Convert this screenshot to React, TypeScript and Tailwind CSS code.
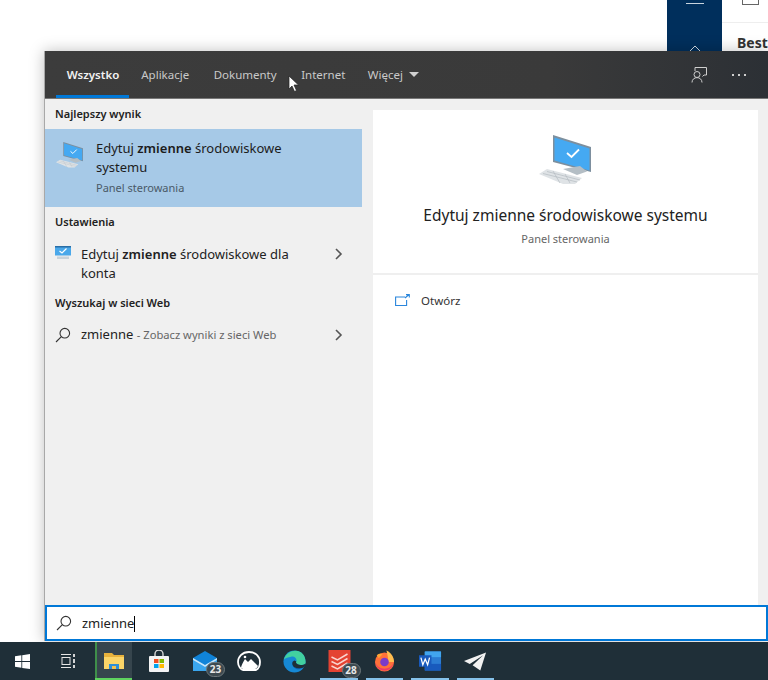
const font = { fontFamily: '"Noto Sans", sans-serif' };

function SearchIcon({ className }: { className?: string }) {
  return (
    <svg viewBox="0 0 16 16" className={className} fill="none" stroke="currentColor" strokeWidth="1.1">
      <circle cx="9.8" cy="6.2" r="4.8" />
      <path d="M6.4 9.6 1 15" />
    </svg>
  );
}

function Chevron() {
  return (
    <svg viewBox="0 0 10 14" className="w-[10px] h-[14px] text-[#555]" fill="none" stroke="currentColor" strokeWidth="1.6">
      <path d="M2 2 7 7 2 12" />
    </svg>
  );
}

function PcIcon({ className }: { className?: string }) {
  return (
    <svg viewBox="0 0 54 50" className={className}>
      <path d="M14 0 52 12v25L14 27z" fill="#7d8f9e" />
      <path d="M15.500 2.500 50.500 13.500v22L15.500 25.500z" fill="#45a9f2" />
      <path d="M28 18l4.500 4 7.500-7.500" fill="none" stroke="#fff" strokeWidth="1.800" />
      <path d="M24 34 41 31l7 5.500-10 3.500z" fill="#b4bec5" />
      <path d="M0 39 8 34l35 9-7 6H24z" fill="#dfe3e6" />
      <path d="M4 38.500 38 47M8 36.500 41 45M14 36 21 48M26 39 31 48" stroke="#b5bcc2" strokeWidth="0.7" />
    </svg>
  );
}

function Tab({ label, active, className = '' }: { label: string; active?: boolean; className?: string }) {
  return (
    <div
      className={`relative h-full flex items-center pt-[1px] text-[11.500px] ${
        active ? 'font-semibold text-[#f2f2f2] w-[73px] justify-center pl-[1px]' : 'text-[#c9c9c9] px-[12.250px]'
      } ${className}`}
    >
      {label}
      {active && <div className="absolute left-0 right-0 bottom-0 h-[3px] bg-[#0078d7]" />}
    </div>
  );
}

function WindowsLogo() {
  return (
    <svg viewBox="0 0 16 16" className="w-[15px] h-[15px]" fill="#fff">
      <path d="M0 2.300 6.800 1.300v6.200H0zM7.700 1.200 16 0v7.500H7.700zM0 8.500h6.800v6.200L0 13.700zM7.700 8.500H16V16l-8.300-1.200z" />
    </svg>
  );
}

function TaskView() {
  return (
    <svg viewBox="0 0 16 16" className="w-[16px] h-[16px]" fill="none" stroke="#e6e6e6" strokeWidth="1">
      <path d="M1 1.500h10M1 14.500h10" />
      <rect x="2" y="4.500" width="8" height="7" />
      <path d="M14 1v3M14 6v4M14 12v3" strokeWidth="1.800" />
    </svg>
  );
}

function Badge({ n, className }: { n: number; className: string }) {
  return (
    <div
      className={`absolute bottom-[-6px] w-[19px] h-[15px] rounded-full bg-[#3d4a50] border border-[#6d777b] flex items-center justify-center text-[10px] font-bold text-[#e8e8e8] ${className}`}
    >
      {n}
    </div>
  );
}

function Explorer() {
  return (
    <svg viewBox="0 0 20 18" className="w-[20px] h-[18px]">
      <path d="M0 1h8l2 2h10v13H0z" fill="#e8b23c" />
      <path d="M0 5h20v12H0z" fill="#fbd568" />
      <path d="M5 12h10v5H5z" fill="#2f8fd6" />
      <path d="M8 14h4v3H8z" fill="#f5c24d" />
    </svg>
  );
}

function Store() {
  return (
    <svg viewBox="0 0 22 22" className="w-[22px] h-[22px]">
      <path d="M7 6V4a4 4 0 0 1 8 0v2" fill="none" stroke="#d8d8d8" strokeWidth="1.400" />
      <rect x="1" y="6" width="20" height="16" rx="1" fill="#f4f4f4" />
      <path d="M6 9h4.500v4H6z" fill="#f25022" />
      <path d="M11.500 9H16v4h-4.500z" fill="#7fba00" />
      <path d="M6 14h4.500v4H6z" fill="#00a4ef" />
      <path d="M11.500 14H16v4h-4.500z" fill="#ffb900" />
    </svg>
  );
}

function Mail() {
  return (
    <svg viewBox="0 0 24 20" className="w-[24px] h-[20px]">
      <path d="M0 7 12 0l12 7v13H0z" fill="#1083d8" />
      <path d="M0 9l12 7 12-7v11H0z" fill="#3aa6ee" />
      <path d="M0 7l12 7 12-7v2L12 16 0 9z" fill="#c5e6fb" />
    </svg>
  );
}

function Photos() {
  return (
    <svg viewBox="0 0 24 20" className="w-[24px] h-[20px]">
      <path d="M12 1C5 1 1 6 1 11c0 4 3 8 5 8h13c2-1 4-4 4-8 0-5-4-10-11-10z" fill="none" stroke="#fff" strokeWidth="1.800" />
      <path d="M4 17c0-2 2-6 4-9l3 3 3-3 7 7c-1 2-2 3-3 3H6z" fill="#fff" />
      <circle cx="8" cy="6" r="1.300" fill="#fff" />
    </svg>
  );
}

function Edge() {
  return (
    <svg viewBox="0 0 24 24" className="w-[23px] h-[23px]">
      <circle cx="12" cy="12" r="11.500" fill="#1688d4" />
      <path d="M1 10C3 2 12-1 18 2c4 2 6 7 5.500 12-3 2.500-9 2-10-1 2-3-1-7-5-6-3 .5-6 1-7.500 3z" fill="#42d0a0" />
      <path d="M10 12c-1 4 1 7 5 8 3 .5 6-1 7-3-3 1-9 1-10-2-.5-1 0-2 .5-3z" fill="#0e5fae" />
      <path d="M12 11c-3 1-3 5 0 7 3 1.500 8 1 10 0 1-1 1.500-3 1.500-4-3 2.500-9 2-10-1 .5-.5.500-1.500-1.500-2z" fill="#1f2f38" />
    </svg>
  );
}

function Todoist() {
  return (
    <svg viewBox="0 0 22 22" className="w-[23px] h-[22px]">
      <rect width="22" height="22" fill="#e44332" />
      <path d="M3 7l6 3 10-6M3 11.500l6 3 10-6M3 16l6 3 10-6" fill="none" stroke="#f9d5d0" strokeWidth="1.500" />
    </svg>
  );
}

function Firefox() {
  return (
    <svg viewBox="0 0 22 22" className="w-[21px] h-[22px]">
      <circle cx="11" cy="12" r="10" fill="#ff7139" />
      <path d="M13 0c5 2 8 7 8 12h-6c0-4-1-8-2-12z" fill="#ffbd4f" />
      <path d="M3 5c2-2 4-2 6-1L5 8z" fill="#ffa436" />
      <circle cx="11" cy="12" r="4.500" fill="#7a3bc9" />
      <path d="M1 12c1 5 5 9 10 9s9-4 10-9c-2 5-6 7-10 7s-8-2-10-7z" fill="#e31587" opacity="0.6" />
    </svg>
  );
}

function Word() {
  return (
    <svg viewBox="0 0 24 22" className="w-[23px] h-[22px]">
      <rect x="6" y="1" width="17" height="20" rx="1" fill="#2b7cd3" />
      <path d="M6 1h17v6H6z" fill="#41a5ee" />
      <path d="M6 14h17v7H6z" fill="#185abd" />
      <rect x="0" y="5" width="13" height="12" fill="#185abd" />
      <path d="M2 7.500 4 15l2.500-6L9 15l2-7.500" fill="none" stroke="#fff" strokeWidth="1.300" />
    </svg>
  );
}

function Telegram() {
  return (
    <svg viewBox="0 0 24 20" className="w-[23px] h-[20px]" fill="#f2f2f2">
      <path d="M23 1 0 10l6 3L20 4 9 14.500 17 20z" />
    </svg>
  );
}

function TaskbarSlot({
  children,
  running,
  active,
  width = 'w-[37px]',
}: {
  children?: React.ReactNode;
  running?: boolean;
  active?: boolean;
  width?: string;
}) {
  return (
    <div className={`relative h-full ${width} flex items-center justify-center ${active ? 'bg-[#36454d]' : ''}`}>
      {active && <div className="absolute left-0 top-0 bottom-0 w-[2px] bg-[#3f8f4a]" />}
      {children}
      {running && (
        <div className={`absolute left-0 right-0 bottom-0 h-[2px] ${active ? 'bg-[#5fd35f]' : 'bg-[#86c2ea]'}`} />
      )}
    </div>
  );
}

export default function App() {
  return (
    <div className="relative w-[768px] h-[680px] overflow-hidden bg-white flex flex-col" style={font}>
      {/* app behind the search panel */}
      <div className="h-[51px] flex shrink-0">
        <div className="ml-[667px] w-[55px] h-full bg-[#002f5c] flex flex-col items-center justify-between">
          <div className="w-[18px] h-px bg-[#c8d4de] mt-[3px]" />
          <svg viewBox="0 0 12 6" className="w-[12px] h-[6px]" fill="none" stroke="#cfd9e2" strokeWidth="1">
            <path d="M1 6 6 1l5 5" />
          </svg>
        </div>
        <div className="flex-1 flex flex-col">
          <div className="h-[25px] border-b border-[#eee] pl-[20px]">
            <div className="w-[17px] h-[5px] border border-t-0 border-[#666]" />
          </div>
          <div className="pl-[15px] pt-[12px] text-[14px] font-bold leading-[16px] text-[#333]">Best</div>
        </div>
      </div>

      {/* search panel */}
      <div className="ml-[44px] flex-1 min-h-0 flex flex-col shadow-[0_0_14px_rgba(0,0,0,0.25)] border-l border-[#a8a8a8]">
        <div className="h-[48px] shrink-0 border-b border-[#777] flex items-center pl-[11px] pr-[22px] bg-gradient-to-r from-[#3c3c3c] via-[#3a3a3a] via-70% to-[#2c3035]">
          <Tab label="Wszystko" active />
          <Tab label="Aplikacje" />
          <Tab label="Dokumenty" />
          <Tab label="Internet" />
          <Tab label="Więcej" className="ml-[-2px]" />
          <svg viewBox="0 0 10 5" className="w-[10px] h-[5px] ml-[-6px]" fill="#d0d0d0">
            <path d="M0 0h10L5 5z" />
          </svg>
          <div className="ml-auto flex items-center gap-[25px]">
            <svg viewBox="0 0 16 16" className="w-[16px] h-[16px]" fill="none" stroke="#cfcfcf" strokeWidth="1">
              <path d="M4 4V.5h11.500v7.500h-2.500l-1.500 1.500" />
              <circle cx="6" cy="7.500" r="3" />
              <path d="M1 15.500c0-6.500 10-6.500 10 0" />
            </svg>
            <div className="flex gap-[4px]">
              <div className="w-[2px] h-[2px] bg-[#cfcfcf]" />
              <div className="w-[2px] h-[2px] bg-[#cfcfcf]" />
              <div className="w-[2px] h-[2px] bg-[#cfcfcf]" />
            </div>
          </div>
        </div>

        <div className="flex-1 min-h-0 flex bg-[#f0f0f0]">
          {/* results list */}
          <div className="w-[317px] shrink-0">
            <div className="h-[30px] flex items-center pl-[10px] pt-[1px] text-[11px] font-semibold text-[#222]">Najlepszy wynik</div>
            <div className="h-[78px] bg-[#a6c9e7] flex pl-[11px]">
              <PcIcon className="w-[28px] h-[26px] mt-[13px]" />
              <div className="ml-[12px] pt-[10px] w-[200px]">
                <div className="text-[13px] leading-[19px] text-[#1c1c1c]">
                  Edytuj <span className="font-semibold">zmienne</span> środowiskowe systemu
                </div>
                <div className="mt-[3px] text-[11px] leading-[16px] text-[#4a5a68]">Panel sterowania</div>
              </div>
            </div>
            <div className="h-[30px] flex items-center pl-[10px] text-[11px] font-semibold text-[#222]">Ustawienia</div>
            <div className="h-[52px] flex items-start pt-[8px] pl-[10px] pr-[18px]">
              <svg viewBox="0 0 16 14" className="w-[16px] h-[14px] mt-[1px] shrink-0">
                <path d="M0 0h16v9.500H0z" fill="#4aa8ea" />
                <path d="M0 0h16v1.500H0z" fill="#2a6ea6" />
                <path d="M4.500 5l2.500 2 4.500-4.500" fill="none" stroke="#fff" strokeWidth="1.200" />
                <path d="M2 10.500h12v2.500H2z" fill="#c8d2da" />
              </svg>
              <div className="ml-[10px] w-[230px] text-[13px] leading-[18.500px] text-[#222]">
                Edytuj <span className="font-semibold">zmienne</span> środowiskowe dla konta
              </div>
              <div className="ml-auto mt-[2px]">
                <Chevron />
              </div>
            </div>
            <div className="h-[26px] mt-[1px] flex items-center pl-[10px] text-[11px] font-semibold text-[#222]">Wyszukaj w sieci Web</div>
            <div className="h-[36px] mt-[1px] flex items-center pl-[10px] pr-[18px]">
              <SearchIcon className="w-[16px] h-[16px] text-[#333]" />
              <div className="ml-[10px] text-[13px] text-[#222]">
                zmienne <span className="text-[11.200px] text-[#666]">- Zobacz wyniki z sieci Web</span>
              </div>
              <div className="ml-auto">
                <Chevron />
              </div>
            </div>
          </div>

          {/* preview */}
          <div className="flex-1 pt-[11px] pl-[11px] pr-[10px]">
            <div className="h-full bg-white flex flex-col">
              <div className="h-[165px] shrink-0 border-b-[2px] border-[#efefef] flex flex-col items-center pt-[25px]">
                <PcIcon className="w-[54px] h-[50px]" />
                <div className="mt-[19px] text-[15.500px] leading-[22px] text-[#222]">Edytuj zmienne środowiskowe systemu</div>
                <div className="mt-[5px] text-[11px] leading-[16px] text-[#666]">Panel sterowania</div>
              </div>
              <div className="flex items-center pl-[22px] pt-[17px]">
                <svg viewBox="0 0 15 13" className="w-[15px] h-[13px]" fill="none" stroke="#2a86dc" strokeWidth="1.100">
                  <path d="M10 3H.6v8.500h11V6" />
                  <path d="M10 4l4-3.500M11 .6h3.300v3" />
                </svg>
                <div className="ml-[11px] text-[11.500px] text-[#333]">Otwórz</div>
              </div>
            </div>
          </div>
        </div>

        {/* search box */}
        <div className="h-[36px] shrink-0 bg-white border-2 border-[#0078d7] flex items-center pl-[9px]">
          <SearchIcon className="w-[16px] h-[16px] text-[#333]" />
          <div className="ml-[10px] pt-[2px] text-[13px] text-[#222]">zmienne</div>
          <div className="w-px h-[16px] mt-[2px] bg-black" />
        </div>
      </div>

      {/* taskbar */}
      <div className="h-[38px] shrink-0 mt-[1px] bg-[#1f2f38] flex items-center pl-[4px]">
        <TaskbarSlot width="w-[36px]">
          <WindowsLogo />
        </TaskbarSlot>
        <TaskbarSlot width="w-[55px]">
          <TaskView />
        </TaskbarSlot>
        <div className="flex h-full gap-[8px]">
          <TaskbarSlot active running>
            <Explorer />
          </TaskbarSlot>
          <TaskbarSlot>
            <Store />
          </TaskbarSlot>
          <TaskbarSlot>
            <div className="relative ml-[3px]">
              <Mail />
              <Badge n={23} className="right-[-8px]" />
            </div>
          </TaskbarSlot>
          <TaskbarSlot>
            <Photos />
          </TaskbarSlot>
          <TaskbarSlot>
            <div className="ml-[2px]">
              <Edge />
            </div>
          </TaskbarSlot>
          <TaskbarSlot width="w-[38px]" running>
            <div className="relative">
              <Todoist />
              <Badge n={28} className="right-[-10px]" />
            </div>
          </TaskbarSlot>
          <TaskbarSlot running>
            <Firefox />
          </TaskbarSlot>
          <TaskbarSlot width="w-[38px]" running>
            <Word />
          </TaskbarSlot>
          <TaskbarSlot running>
            <Telegram />
          </TaskbarSlot>
        </div>
      </div>

      {/* mouse pointer */}
      <svg viewBox="0 0 12 18" className="absolute left-[288px] top-[75px] w-[12px] h-[18px]" fill="#fff" stroke="#222" strokeWidth="0.700">
        <path d="M1 1v13l3-3 2.500 5.500 2-1L6 10h4.500z" />
      </svg>
    </div>
  );
}
